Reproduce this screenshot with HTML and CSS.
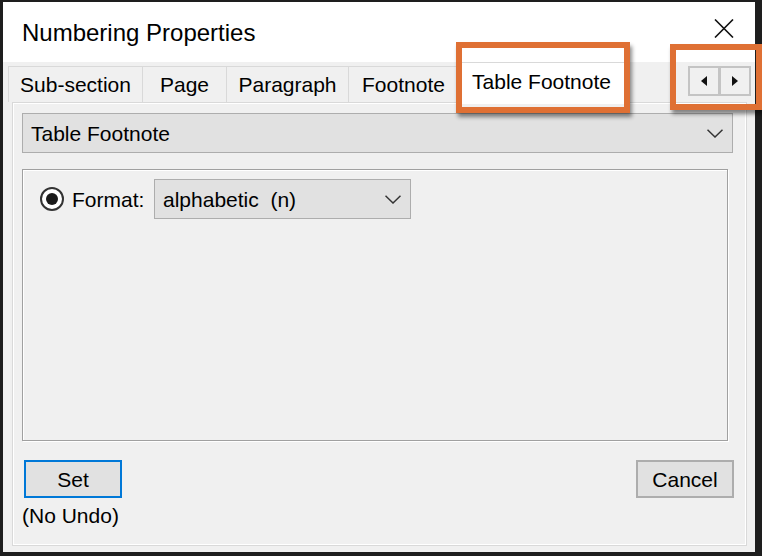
FILE: index.html
```html
<!DOCTYPE html>
<html>
<head>
<meta charset="utf-8">
<link rel="stylesheet" href="styles.css">
</head>
<body>
<div class="window">
  <div class="titlebar">
    <span class="title">Numbering Properties</span>
    <svg class="close" width="20" height="19" viewBox="0 0 20 19"><path d="M1 0.5 L19 18.5 M19 0.5 L1 18.5" stroke="#111" stroke-width="1.6" fill="none"/></svg>
  </div>
  <div class="client">
    <div class="tabstrip">
      <div class="tab tab-sub">Sub-section</div>
      <div class="tab tab-page">Page</div>
      <div class="tab tab-para">Paragraph</div>
      <div class="tab tab-foot">Footnote</div>
      <div class="tab tab-sel">Table Footnote</div>
      <div class="scroller">
        <div class="sbtn"><svg width="6" height="10" viewBox="0 0 6 10"><path d="M6 0 L0 5 L6 10 Z" fill="#111"/></svg></div>
        <div class="sbtn"><svg width="6" height="10" viewBox="0 0 6 10"><path d="M0 0 L6 5 L0 10 Z" fill="#111"/></svg></div>
      </div>
    </div>
    <div class="panel">
      <div class="combo combo-wide">
        <span>Table Footnote</span>
        <svg width="16" height="9" viewBox="0 0 16 9"><path d="M0.5 0.8 L8 8 L15.5 0.8" stroke="#333" stroke-width="1.5" fill="none"/></svg>
      </div>
      <div class="group">
        <div class="row">
          <span class="radio"><span class="dot"></span></span>
          <span class="label">Format:</span>
          <div class="combo combo-fmt">
            <span class="keep">alphabetic  (n)</span>
            <svg width="16" height="9" viewBox="0 0 16 9"><path d="M0.5 0.8 L8 8 L15.5 0.8" stroke="#333" stroke-width="1.5" fill="none"/></svg>
          </div>
        </div>
      </div>
      <div class="actions">
        <div class="setcol">
          <div class="btn btn-default">Set</div>
          <div class="note">(No Undo)</div>
        </div>
        <div class="btn">Cancel</div>
      </div>
    </div>
  </div>
</div>
<div class="mark mark-tab"></div>
<div class="mark mark-scroll"></div>
</body>
</html>
```

FILE: styles.css
```css
html, body {
  margin: 0;
  padding: 0;
}
body {
  width: 762px;
  height: 556px;
  overflow: hidden;
  background: #1e1e1e;
  position: relative;
  font-family: "Liberation Sans", Arial, sans-serif;
  font-size: 21px;
  color: #000;
}
.window {
  margin: 2px 7px 0 3px;
  width: 752px;
  height: 550px;
  background: #f0f0f0;
  display: flex;
  flex-direction: column;
}
.titlebar {
  height: 60px;
  background: #fff;
  display: flex;
  align-items: center;
  justify-content: space-between;
  padding: 0 21px 0 19px;
  flex: none;
}
.title {
  font-size: 24px;
  line-height: 26px;
  margin-top: 1px;
}
.close {
  align-self: flex-start;
  margin-top: 17px;
}
.client {
  flex: 1;
  display: flex;
  flex-direction: column;
}
.tabstrip {
  height: 40px;
  display: flex;
  align-items: flex-end;
  padding-left: 5px;
  flex: none;
}
.tab {
  box-sizing: border-box;
  height: 36px;
  border: 1px solid #d9d9d9;
  border-bottom: none;
  margin-left: -1px;
  display: flex;
  align-items: center;
  justify-content: center;
  background: #f0f0f0;
  padding-top: 1px;
}
.tab-sub { width: 135px; margin-left: 0; }
.tab-page { width: 85px; }
.tab-para { width: 123px; }
.tab-foot { width: 111px; }
.tab-sel {
  width: 167px;
  height: 42px;
  margin-bottom: -2px;
  background: #fff;
  position: relative;
  z-index: 1;
  padding-top: 0;
  padding-bottom: 4px;
}
.scroller {
  margin-left: auto;
  margin-right: 4px;
  align-self: flex-start;
  margin-top: 4px;
  display: flex;
}
.sbtn {
  box-sizing: border-box;
  width: 32px;
  height: 30px;
  border: 2px solid #c4c4c4;
  background: #f0f0f0;
  display: flex;
  align-items: center;
  justify-content: center;
}
.sbtn + .sbtn {
  margin-left: -1px;
}
.panel {
  margin-left: 9px;
  width: 735px;
  height: 444px;
  box-sizing: border-box;
  border: 1px solid #d9d9d9;
  box-shadow: inset 1px 1px 0 #fff, inset -1px -1px 0 #fff;
  display: flex;
  flex-direction: column;
}
.combo {
  box-sizing: border-box;
  height: 40px;
  background: #e1e1e1;
  border: 1px solid #adadad;
  display: flex;
  align-items: center;
  justify-content: space-between;
  padding: 1px 9px 0 8px;
}
.combo-wide {
  margin: 10px 0 0 9px;
  width: 711px;
}
.combo-fmt {
  width: 257px;
}
.keep {
  white-space: pre;
}
.group {
  box-sizing: border-box;
  margin: 16px 0 0 9px;
  width: 706px;
  height: 272px;
  border: 1px solid #a0a0a0;
  box-shadow: inset 1px 1px 0 #fff, 1px 1px 0 #fff;
  padding: 9px 0 0 17px;
}
.row {
  display: flex;
  align-items: center;
  height: 40px;
}
.radio {
  box-sizing: border-box;
  width: 24px;
  height: 24px;
  border-radius: 50%;
  border: 2px solid #333;
  background: #fff;
  display: flex;
  align-items: center;
  justify-content: center;
}
.dot {
  width: 12px;
  height: 12px;
  border-radius: 50%;
  background: #1a1a1a;
}
.label {
  width: 82px;
  margin-left: 8px;
  padding-top: 1px;
}
.actions {
  display: flex;
  justify-content: space-between;
  align-items: flex-start;
  margin-top: 19px;
  padding: 0 12px 0 11px;
}
.setcol {
  display: flex;
  flex-direction: column;
}
.btn {
  box-sizing: border-box;
  width: 98px;
  height: 38px;
  background: #e1e1e1;
  border: 2px solid #adadad;
  display: flex;
  align-items: center;
  justify-content: center;
  padding-top: 1px;
}
.btn-default {
  border-color: #0078d7;
}
.note {
  margin: 6px 0 0 -2px;
  line-height: 24px;
}
.mark {
  position: absolute;
  box-sizing: border-box;
  border: 6px solid #df7034;
  box-shadow: 2px 4px 4px rgba(0, 0, 0, 0.45);
  z-index: 5;
}
.mark-tab {
  left: 456px;
  top: 42px;
  width: 174px;
  height: 71px;
}
.mark-scroll {
  left: 670px;
  top: 44px;
  width: 92px;
  height: 66px;
}
```
